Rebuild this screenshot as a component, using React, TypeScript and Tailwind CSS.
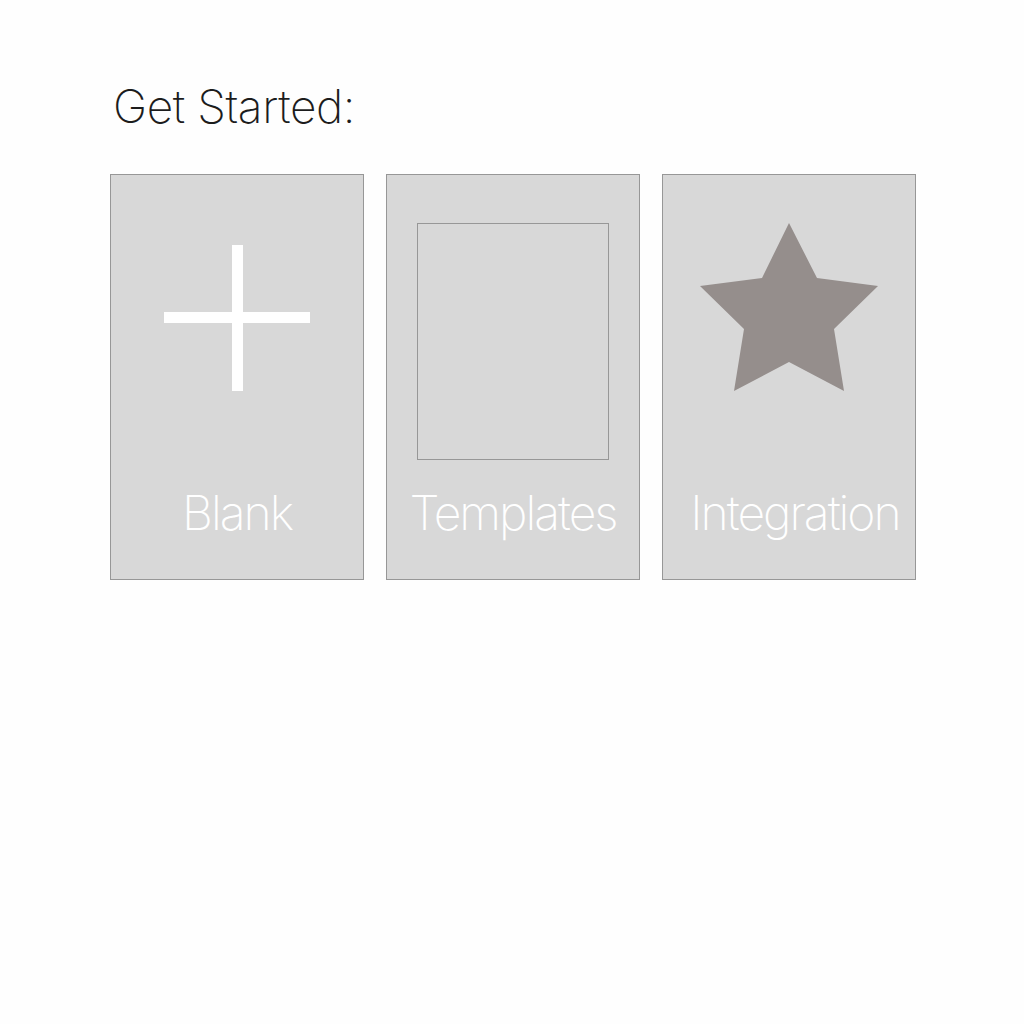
import React from 'react';

const labelFont = { fontFamily: 'Inter, "Liberation Sans", sans-serif' };

const PlusIcon = () => (
    <svg width="146" height="146" viewBox="0 0 146 146" className="mt-[70px]">
        <rect x="68" y="0" width="11" height="146" fill="#ffffff" />
        <rect x="0" y="67" width="146" height="11" fill="#ffffff" />
    </svg>
);

const StarIcon = () => (
    <svg width="178" height="169" viewBox="0 0 178 169" className="mt-[48px]">
        <polygon
            points="89,0 117,55 178,63 134,106 144,168 89,139 34,168 44,106 0,63 62,55"
            fill="#958e8c"
        />
    </svg>
);

interface CardProps {
    label: string;
    children: React.ReactNode;
    labelClass?: string;
}

const Card: React.FC<CardProps> = ({ label, children, labelClass = '' }) => (
    <div className="w-[254px] h-[406px] border border-[#979797] bg-[#d8d8d8] flex flex-col items-center">
        {children}
        <div
            className={`mt-auto pb-[36px] text-[48px] leading-[60px] font-extralight text-white tracking-[-2px] whitespace-nowrap ${labelClass}`}
            style={labelFont}
        >
            {label}
        </div>
    </div>
);

export default function App() {
    return (
        <div className="min-h-[1024px] bg-[#fefefe] pl-[110px] pt-[78px]">
            {/* Heading */}
            <h1
                className="pl-[3px] text-[46px] leading-[56px] font-[250] text-[#1c1c1c] tracking-[-0.4px]"
                style={labelFont}
            >
                Get Started:
            </h1>

            {/* Options */}
            <div className="mt-[40px] flex gap-[22px]">
                <Card label="Blank">
                    <PlusIcon />
                </Card>
                <Card label="Templates">
                    <div className="mt-[48px] w-[192px] h-[237px] border border-[#979797]" />
                </Card>
                <Card label="Integration" labelClass="pl-[12px]">
                    <StarIcon />
                </Card>
            </div>
        </div>
    );
}
